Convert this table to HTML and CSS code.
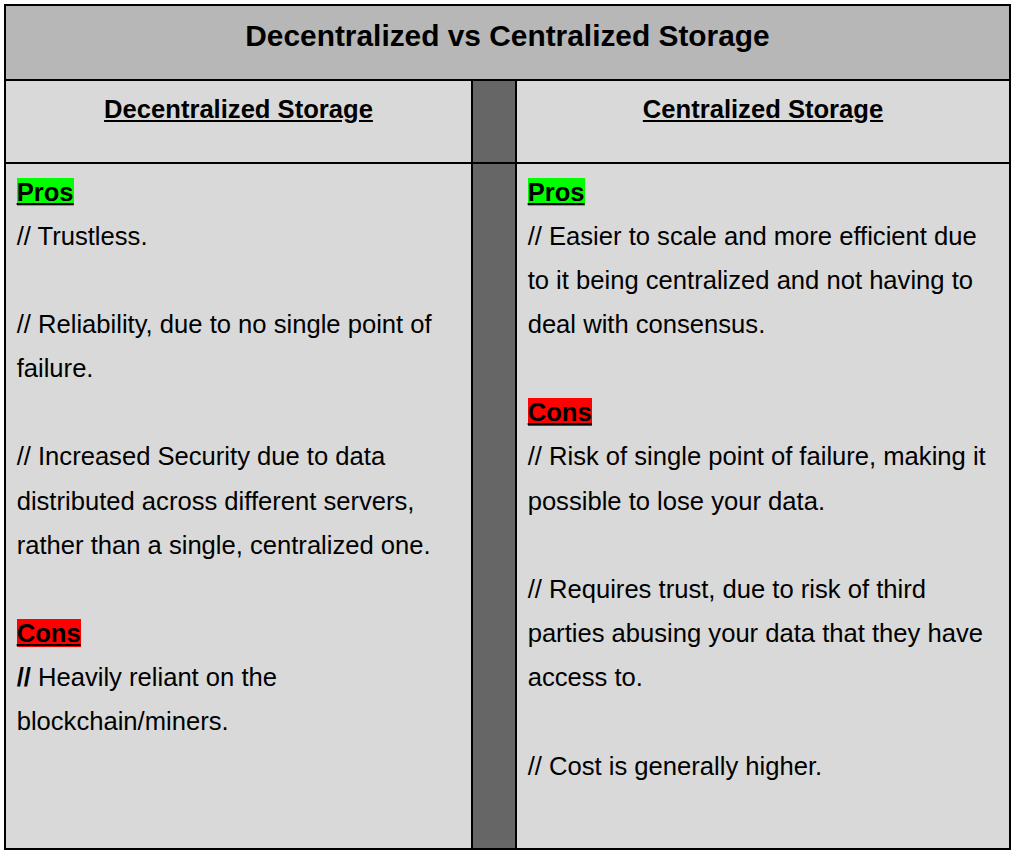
FILE: index.html
```html
<!DOCTYPE html>
<html lang="en">
<head>
<meta charset="utf-8">
<title>Decentralized vs Centralized Storage</title>
<link rel="stylesheet" href="styles.css">
</head>
<body>
<div class="table">
  <div class="cell title">Decentralized vs Centralized Storage</div>

  <div class="cell head"><span class="head-text">Decentralized Storage</span></div>
  <div class="cell divider"></div>
  <div class="cell head"><span class="head-text">Centralized Storage</span></div>

  <div class="cell body">
    <p class="label"><span class="tag pro">Pros</span></p>
    <p class="item">// Trustless.</p>
    <p class="item">// Reliability, due to no single point of failure.</p>
    <p class="item">// Increased Security due to data distributed across different servers, rather than a single, centralized one.</p>
    <p class="label"><span class="tag con">Cons</span></p>
    <p class="item"><b class="slash">// </b>Heavily reliant on the blockchain/miners.</p>
  </div>
  <div class="cell divider"></div>
  <div class="cell body">
    <p class="label"><span class="tag pro">Pros</span></p>
    <p class="item">// Easier to scale and more efficient due to it being centralized and not having to deal with consensus.</p>
    <p class="label"><span class="tag con">Cons</span></p>
    <p class="item">// Risk of single point of failure, making it possible to lose your data.</p>
    <p class="item">// Requires trust, due to risk of third parties abusing your data that they have access to.</p>
    <p class="item">// Cost is generally higher.</p>
  </div>
</div>
</body>
</html>
```

FILE: styles.css
```css
html, body {
  margin: 0;
  padding: 0;
  background: #ffffff;
}

body {
  padding: 4px;
  font-family: "Liberation Sans", Arial, sans-serif;
  color: #000000;
}

.table {
  display: inline-grid;
  grid-template-columns: 465px 42px 492px;
  grid-template-rows: 73px 81px 684px;
  gap: 2px;
  padding: 2px;
  background: #000000;
}

.cell {
  background: #d9d9d9;
  padding: 5.5px 10.67px 5px;
  font-size: 25.6px;
  line-height: 44.16px;
}

.title {
  grid-column: 1 / -1;
  background: #b7b7b7;
  font-size: 29.87px;
  line-height: 1.15;
  font-weight: bold;
  text-align: center;
  padding-top: 12.5px;
}

.head {
  text-align: center;
  font-weight: bold;
}

.head-text {
  text-decoration: underline;
}

.divider {
  background: #666666;
  padding: 0;
}

.body p {
  margin: 0;
}

.body .item + .item,
.body .item + .label {
  margin-top: 44.16px;
}

.slash {
  font-weight: bold;
}

.tag {
  font-weight: bold;
  text-decoration: underline;
}

.tag.pro {
  background: #00ff00;
}

.tag.con {
  background: #ff0000;
}
```
